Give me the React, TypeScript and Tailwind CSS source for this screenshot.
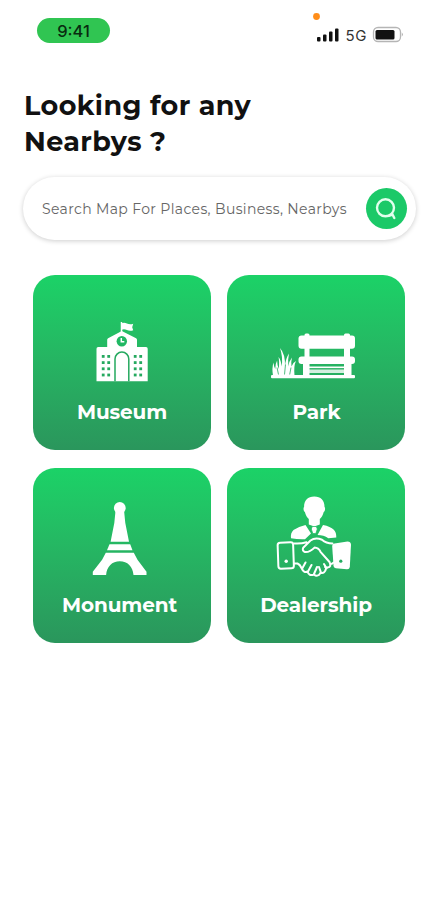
import type { ReactNode } from "react";

function MuseumIcon() {
  return (
    <svg width="52" height="60" viewBox="96 322 52 60" fill="#fff">
      <path d="M121.500 322.500v10" stroke="#fff" strokeWidth="1.500" strokeLinecap="round" />
      <path d="M121.500 323.300q2.700-1.300 5.400.2 3 1.500 6.300.3l-1 3.400 1 3q-3.300 1.200-6.300-.2-2.700-1.400-5.400-.2z" />
      <path d="M121.800 331l14.300 7.200q.9.500.9 1.500v7.300h9q1.700 0 1.700 1.700V381.300H96.500V348.700q0-1.700 1.700-1.700h9v-7.300q0-1 .9-1.500z" />
      <circle cx="121.800" cy="341.300" r="5.200" fill="#20b863" />
      <path d="M121.300 338v3.800h3" fill="none" stroke="#fff" strokeWidth="1.500" />
      <path d="M115 381.300V359a6.900 6.900 0 0 1 13.800 0v22.300" fill="none" stroke="#25a95f" strokeWidth="1.500" />
      <g fill="#25a95f">
        {[355, 361.2, 367.4, 373.6].map((y) =>
          [101.8, 107.3, 133.8, 139.3].map((x) => (
            <rect key={`${x}-${y}`} x={x} y={y} width="2.800" height="2.800" />
          ))
        )}
      </g>
    </svg>
  );
}

function ParkIcon() {
  return (
    <svg width="84" height="46" viewBox="271 332.500 84 46" fill="#fff">
      {/* bench */}
      <rect x="304.500" y="333" width="5" height="43" rx="1.500" />
      <rect x="344" y="333" width="6" height="43" rx="1.500" />
      <rect x="298.500" y="335" width="56.500" height="13.300" rx="3" />
      <rect x="298.500" y="356" width="56.500" height="7.500" rx="3" />
      <rect x="303" y="362" width="5.500" height="13" />
      <rect x="346" y="362" width="5.500" height="13" />
      <rect x="308" y="366" width="38" height="1.600" />
      <rect x="308" y="369" width="38" height="3.500" opacity=".8" />
      <rect x="271" y="374.500" width="84" height="3.200" rx="1" />
      {/* grass */}
      <path d="M273 375q-1.300-7.500.5-13 .3 4 1.700 6.500 0-5 1.900-8.500.1 5 1.700 8.500.7-8-.3-12 2.300 2.500 3.200 9.500 1.300-10-1.700-18.500 5.400 6 5 18.500.5-8 4-13-1.500 7-.6 13 .6-5.500 3.600-9-1.300 5-.5 9 1.200-3.800 4.500-5.500-2.400 4.500-1.500 14.500z" />
      <path d="M277 367l1.500 7M285.500 364l-1 10M291 367l-1.300 7" fill="none" stroke="#25ad60" strokeWidth=".8" />
    </svg>
  );
}

function MonumentIcon() {
  return (
    <svg width="56" height="74" viewBox="92.500 502 56 74" fill="#fff">
      <circle cx="120.300" cy="508" r="5.900" />
      <path d="M116 511h8.600l1.200 12 3.700 18.700h-18.400l3.700-18.700z" />
      <path d="M110 544.200h20.700l2.300 6.100h-25.500z" />
      <path d="M106.300 552.800h28l3.700 7 9 12v3.200h-13c-.7-8.500-6-13.700-13.700-13.700s-13 5.200-13.700 13.700H93.300v-3.200l9.300-12z" />
    </svg>
  );
}

function DealershipIcon() {
  return (
    <svg width="76" height="82" viewBox="276 496 76 82" fill="#fff">
      {/* person */}
      <path d="M314.300 496.500c6.700 0 10.400 4.300 10.200 10.500 1 .5.700 4-.8 5-.8 3.200-2.200 5.500-3.900 7v5.500l-5.500 2-5.500-2v-5.500c-1.700-1.500-3.100-3.800-3.900-7-1.500-1-1.800-4.500-.8-5-.2-6.200 3.500-10.500 10.200-10.500z" />
      <path d="M305.500 525l5.500 8.500-6 5.700q-7 .3-14-1-.7-5.300 2.500-8.300 5-3.200 12-4.900zM323 525q7.500 1.500 10.800 4.700 2.700 2.800 2.500 7.800l-8 .7q-4.500-3.200-10.800-3.200z" />
      <path d="M312.300 526.500h4l1 2.500-1.500 4.500h-3l-1.500-4.500z" stroke="#1fbd61" strokeWidth=".7" />
      {/* left cuff */}
      <g transform="rotate(-2 285.500 555.500)">
        <rect x="278" y="542.500" width="15.500" height="26" rx="2.500" fill="none" stroke="#fff" strokeWidth="2" />
      </g>
      <circle cx="286.200" cy="561.200" r="1.700" />
      {/* right cuff */}
      <path d="M334.500 543.500l13-2q3.300 0 3.500 3l-1.200 22.500q-.3 2.500-3 2.300l-11-1q-2-.3-2.300-2.300l-1.300-20q0-2.100 2.300-2.500z" />
      <circle cx="340.800" cy="561.200" r="1.600" fill="#23ad60" />
      {/* hands */}
      <g fill="none" stroke="#fff" strokeWidth="2" strokeLinecap="round" strokeLinejoin="round">
        <path d="M294 543.500q7 .5 12.500-1.200M332.500 543.500q-6.500-.2-10.500-3.800-6.700-2.700-11.500.8l-7.300 7.200q-1.300 3.300 1.700 4.300 4.800.5 9.600-4.400 4 .2 6 4.200l9 10.200q2.500 5-2 5.500-1.200.3-2.500-.5" />
        <path d="M294 563.500h3.500q2.500 1 4 4.500 2.300 5.300 6 3.500 1.500 5 6.500 3 2.500 2.300 5.200.3l1.300-2.100q4.500 1.300 5.500-4.200M302.500 568l3-5.500M308 571.500l3.500-6.500M314 574l3-7M319 567l2 5.700M324 564l2.500 4.300M330.500 564q2 0 3-1.500" />
      </g>
    </svg>
  );
}

type Category = {
  label: string;
  icon: ReactNode;
  iconClass: string;
  labelClass: string;
};

const categories: Category[] = [
  { label: "Museum", icon: <MuseumIcon />, iconClass: "h-[107px]", labelClass: "tracking-[-0.1px]" },
  { label: "Park", icon: <ParkIcon />, iconClass: "h-[104px] pr-[6px]", labelClass: "tracking-[-0.1px] pl-px" },
  { label: "Monument", icon: <MonumentIcon />, iconClass: "h-[108px] pr-[4px]", labelClass: "tracking-[-0.1px] pr-[5px]" },
  { label: "Dealership", icon: <DealershipIcon />, iconClass: "h-[110px] pr-[4px]", labelClass: "tracking-[-0.1px]" },
];

function CategoryCard({ label, icon, iconClass, labelClass }: Category) {
  return (
    <button className="flex h-[175px] flex-col items-center justify-between rounded-[22px] bg-linear-to-b from-[#1bd267] to-[#2a965c] pb-[26px]">
      <span className={`flex shrink-0 items-end justify-center ${iconClass}`}>{icon}</span>
      <span className={`text-[20px] leading-6 font-bold whitespace-nowrap text-white ${labelClass}`}>
        {label}
      </span>
    </button>
  );
}

function StatusBar() {
  return (
    <header className="flex h-12 items-start justify-between pr-[29px] pl-[37px] font-['Inter',sans-serif]">
      <div className="mt-[18px] flex h-[25px] w-[73px] items-center justify-center rounded-full bg-[#30c552] pt-px text-[16.5px] font-medium text-[#092b10]">
        9:41
      </div>
      <svg width="90" height="34" viewBox="313 12 90 34" className="mt-3">
        <circle cx="316.500" cy="16.500" r="3.400" fill="#ff8d19" />
        <g fill="#111">
          <rect x="317" y="37" width="3.500" height="4.500" rx="1" />
          <rect x="323" y="34.500" width="3.500" height="7" rx="1" />
          <rect x="329" y="31.500" width="3.500" height="10" rx="1" />
          <rect x="335" y="28.500" width="3.500" height="13" rx="1" />
        </g>
        <text x="345.500" y="41.200" fontSize="15" textLength="21" fill="#333">
          5G
        </text>
        <rect x="373.500" y="27.500" width="27" height="14" rx="4.500" fill="none" stroke="#b5b5b5" strokeWidth="1.300" />
        <rect x="375.500" y="30" width="19" height="9.500" rx="1.500" fill="#111" />
        <path d="M401.800 32.500q2 2 0 4z" fill="#aaa" />
      </svg>
    </header>
  );
}

export default function App() {
  return (
    <main className="min-h-[900px] w-full bg-white font-['Montserrat','Inter',sans-serif]">
      <StatusBar />

      <h1 className="mt-10 ml-6 text-[27px] leading-9 font-bold tracking-[0.4px] text-[#111]">
        Looking for any
        <br />
        Nearbys ?
      </h1>

      <div className="mt-[17px] mr-4 ml-[23px] flex h-[63px] items-center justify-between rounded-full bg-white pr-[9.5px] pl-[19px] shadow-[0_1px_5px_rgba(0,0,0,0.2)]">
        <span className="pt-[2px] text-[14px] tracking-[0.36px] whitespace-nowrap text-[#666]">
          Search Map For Places, Business, Nearbys
        </span>
        <button aria-label="Search" className="flex size-[41px] shrink-0 items-center justify-center rounded-full bg-[#1bc968]">
          <svg width="24" height="24" viewBox="0 0 24 24" fill="none" stroke="#e2ffed" strokeWidth="2.400" strokeLinecap="round">
            <circle cx="11.500" cy="10.800" r="8.500" />
            <path d="M15.500 18.500l3-1 1.800 3.500" />
          </svg>
        </button>
      </div>

      <section className="mt-[35px] mr-[27px] ml-[33px] grid grid-cols-2 gap-x-4 gap-y-[18px]">
        {categories.map((c) => (
          <CategoryCard key={c.label} {...c} />
        ))}
      </section>
    </main>
  );
}
